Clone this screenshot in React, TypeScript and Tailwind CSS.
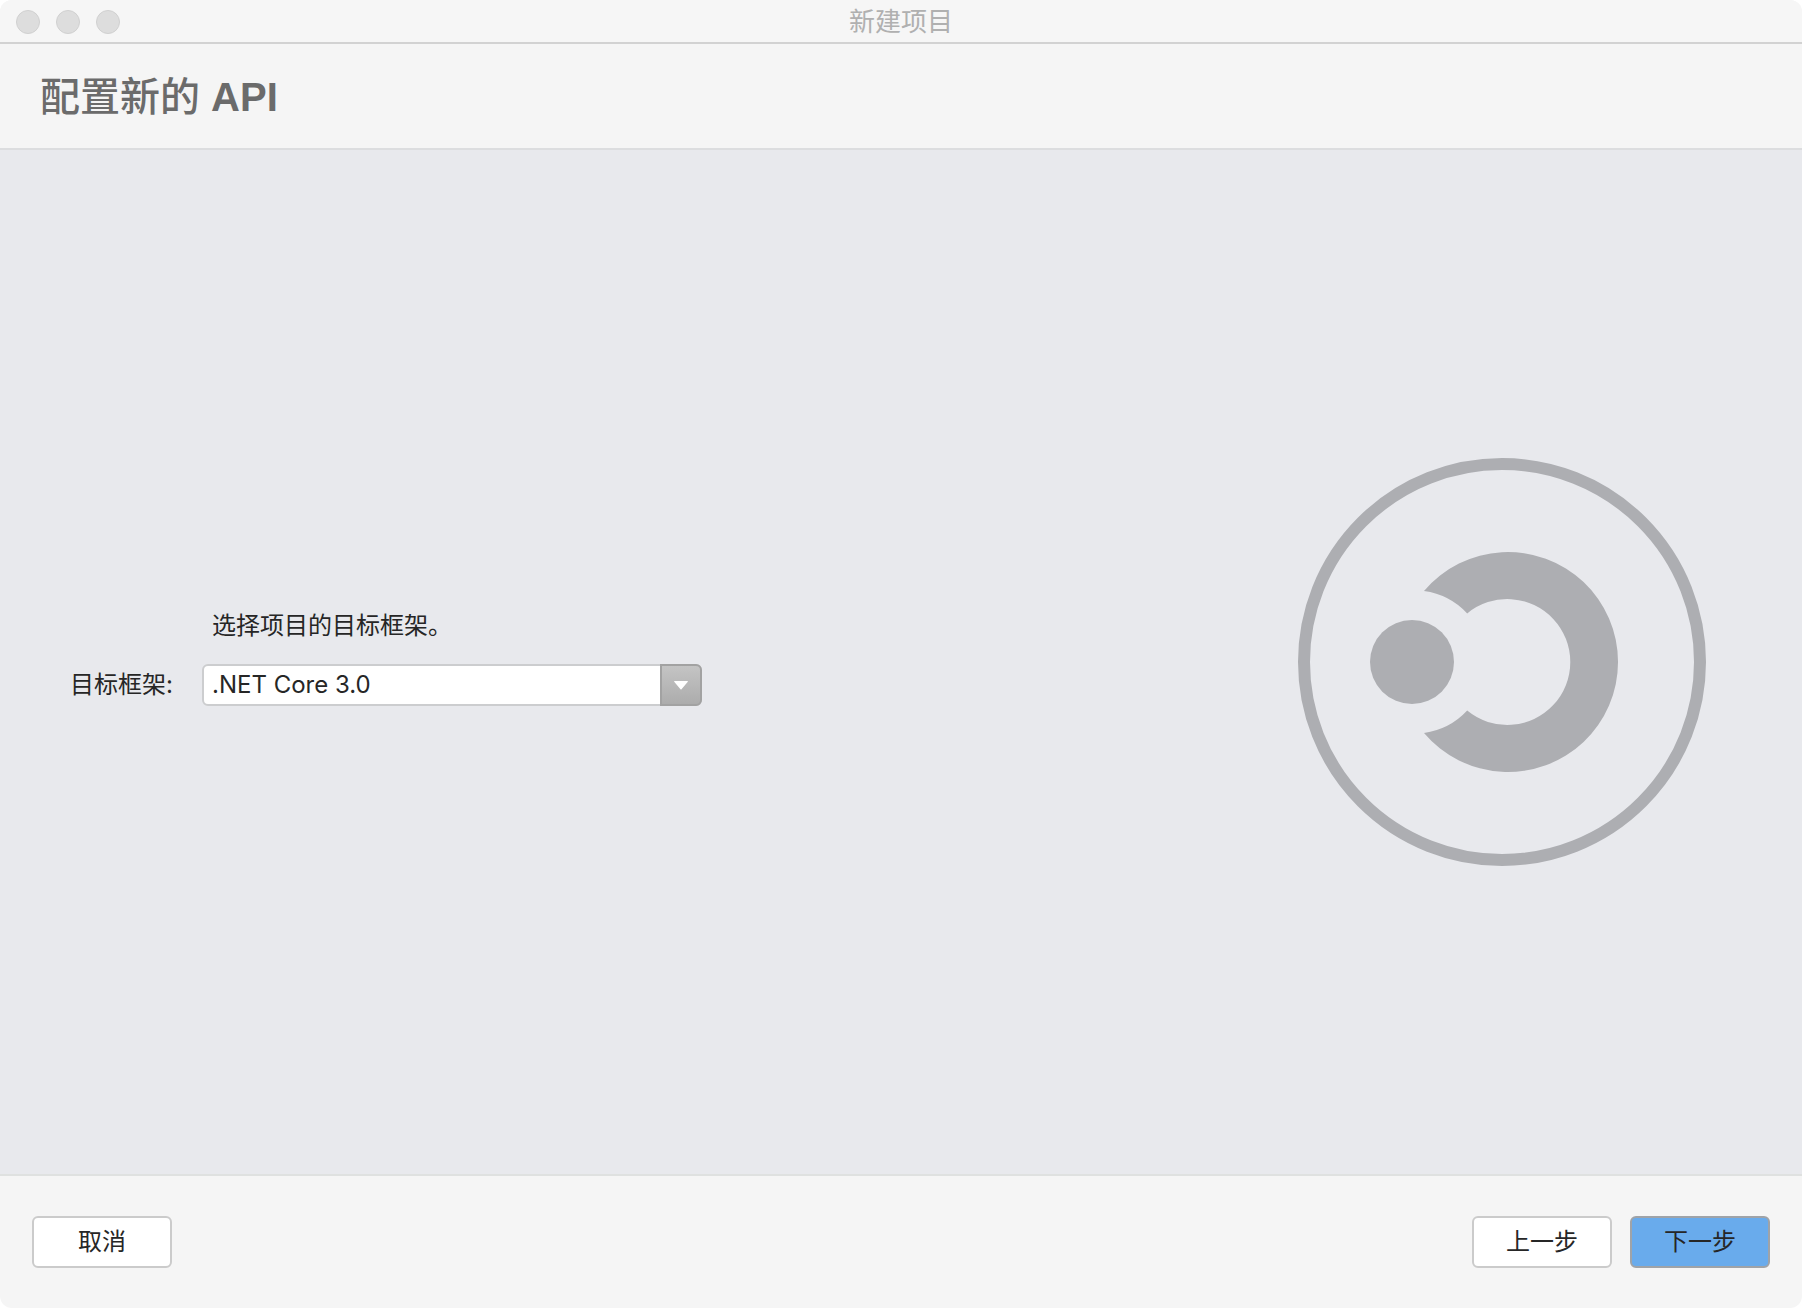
import React, { useState } from "react";

const frameworks = [".NET Core 3.0", ".NET Core 2.2", ".NET Core 2.1"];

// Disabled window controls of an inactive window
function TrafficLights() {
    return (
        <div className="flex gap-4">
            {["关闭", "最小化", "缩放"].map((label) => (
                <button
                    key={label}
                    type="button"
                    disabled
                    aria-label={label}
                    className="size-6 rounded-full border border-[#d0d0d0] bg-[#dddddd]"
                />
            ))}
        </div>
    );
}

function TemplateLogo() {
    return (
        <svg viewBox="0 0 408 408" className="size-[408px] shrink-0 text-[#adaeb2]" aria-hidden="true">
            <circle cx="204" cy="204" r="198" fill="none" stroke="currentColor" strokeWidth="12" />
            <circle cx="114" cy="204" r="42" fill="currentColor" />
            <path
                d="M126 133 A110 110 0 1 1 126 275 A72.5 72.5 0 0 0 169.2 252.6 A63 63 0 1 0 169.2 155.4 A72.5 72.5 0 0 0 126 133 Z"
                fill="currentColor"
            />
        </svg>
    );
}

export default function App(): React.ReactNode {
    const [framework, setFramework] = useState(frameworks[0]);

    const buttonClass = "h-[52px] w-[140px] rounded-md border-2 text-2xl";

    return (
        <div className="bg-white">
            <div className="flex min-h-screen flex-col overflow-hidden rounded-xl bg-[#f5f5f5] font-['Inter','Noto_Sans_CJK_SC',sans-serif] text-[#262626]">
                {/* Title bar */}
                <div className="grid h-11 grid-cols-[1fr_auto_1fr] items-center border-b-2 border-[#d2d2d2] bg-[#f6f6f6] px-4 pt-0.5">
                    <TrafficLights />
                    <div className="text-[26px] leading-8 text-[#b0b0b0]">新建项目</div>
                </div>

                <header className="flex h-[106px] items-center border-b-2 border-[#dcdddf] px-10 pt-0.5">
                    <h1 className="font-['Liberation_Sans','Noto_Sans_CJK_SC',sans-serif] text-[40px] leading-[48px] font-medium text-[#6b6b6b]">
                        配置新的<b className="font-bold"> API</b>
                    </h1>
                </header>

                {/* Content */}
                <main className="flex flex-1 items-center justify-between bg-[#e8e9ed] pr-24 pl-[70px]">
                    <form className="grid grid-cols-[132px_500px] items-center gap-y-[22px] pb-2 text-2xl">
                        <p className="col-start-2 pl-[10px]">选择项目的目标框架。</p>
                        <label htmlFor="framework">目标框架:</label>
                        <div className="relative">
                            <select
                                id="framework"
                                value={framework}
                                onChange={(e) => setFramework(e.target.value)}
                                className="block h-[42px] w-full appearance-none rounded-md border-2 border-[#cccdcf] bg-white pr-12 pl-2 text-2xl leading-8"
                            >
                                {frameworks.map((name) => (
                                    <option key={name}>{name}</option>
                                ))}
                            </select>
                            <span className="pointer-events-none absolute inset-y-0 right-0 flex w-[42px] items-center justify-center rounded-r-md border-2 border-[#a2a2a2] bg-linear-to-b from-[#c4c4c4] to-[#acacac]">
                                <svg viewBox="0 0 14 9" className="h-[9px] w-[14px] fill-white" aria-hidden="true">
                                    <path d="M0.5 0 H13.5 Q14.2 0.3 13.6 1 L7.5 8.3 Q7 8.8 6.5 8.3 L0.4 1 Q-0.2 0.3 0.5 0 Z" />
                                </svg>
                            </span>
                        </div>
                    </form>
                    <TemplateLogo />
                </main>

                <footer className="flex h-[134px] items-center justify-between border-t-2 border-[#dfe1e0] px-8">
                    <button type="button" className={`${buttonClass} border-[#cbcbcb] bg-white`}>
                        取消
                    </button>
                    <div className="flex gap-[18px]">
                        <button type="button" className={`${buttonClass} border-[#cbcbcb] bg-white`}>
                            上一步
                        </button>
                        <button type="button" className={`${buttonClass} border-[#9fa3a8] bg-[#69abec]`}>
                            下一步
                        </button>
                    </div>
                </footer>
            </div>
        </div>
    );
}
